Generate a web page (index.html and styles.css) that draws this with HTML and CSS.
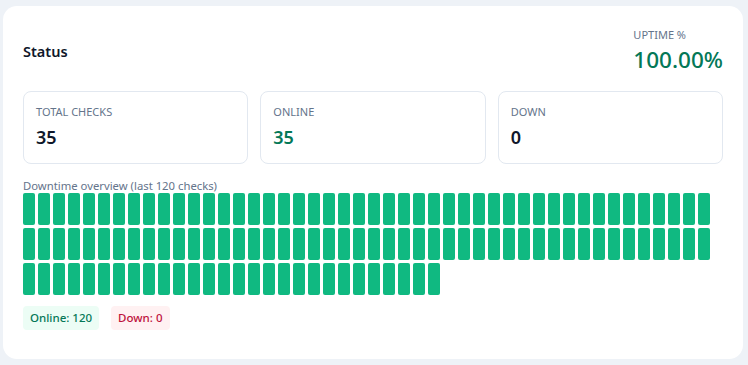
FILE: index.html
```html
<!DOCTYPE html>
<html>
<head>
    <title>Status</title>
    <link rel="stylesheet" href="styles.css">
</head>
<body>
    <div class="card">
        <div class="header">
            <h2 class="title">Status</h2>
            <div class="uptime">
                <div class="label">UPTIME %</div>
                <div class="uptime-value">100.00%</div>
            </div>
        </div>

        <div class="stats">
            <div class="stat">
                <div class="label">TOTAL CHECKS</div>
                <div class="stat-value">35</div>
            </div>
            <div class="stat">
                <div class="label">ONLINE</div>
                <div class="stat-value online">35</div>
            </div>
            <div class="stat">
                <div class="label">DOWN</div>
                <div class="stat-value">0</div>
            </div>
        </div>

        <div class="overview-title">Downtime overview (last 120 checks)</div>
        <div class="bars" id="bars"></div>

        <div class="badges">
            <span class="badge badge-online">Online: 120</span>
            <span class="badge badge-down">Down: 0</span>
        </div>
    </div>

    <script>
        var bars = document.getElementById("bars");
        for (var i = 0; i < 120; i++) {
            var b = document.createElement("span");
            b.className = "bar";
            bars.appendChild(b);
        }
    </script>
</body>
</html>
```

FILE: styles.css
```css
/* page */
body {
    margin: 0;
    padding: 6px 5px 0 3px;
    background-color: #eef2f7;
    font-family: "Noto Sans", "Open Sans", sans-serif;
    color: #0f172a;
}
.card {
    width: 700px;
    padding: 20px 20px 29px 20px;
    background-color: #fff;
    border-radius: 14px;
}

/* header */
.header {
    display: flex;
    justify-content: space-between;
    align-items: center;
}
.title {
    margin: 0;
    font-size: 14.5px;
    font-weight: 600;
}
.uptime {
    padding-top: 2px;
}
.label {
    font-size: 11px;
    color: #64748b;
    line-height: 14px;
}
.uptime-value {
    font-size: 22.5px;
    font-weight: 500;
    line-height: 30px;
    margin-top: 3px;
    color: #047857;
}

/* stat cards */
.stats {
    display: grid;
    grid-template-columns: repeat(3, 1fr);
    gap: 12px;
    margin-top: 16px;
}
.stat {
    border: solid 1px #e2e8f0;
    border-radius: 8px;
    padding: 13px 12px 12px 12px;
    height: 46px;
}
.stat-value {
    font-size: 18px;
    font-weight: 600;
    line-height: 24px;
    margin-top: 6px;
}
.stat-value.online {
    color: #047857;
}

/* downtime bars */
.overview-title {
    margin-top: 15px;
    font-size: 11.3px;
    line-height: 14px;
    color: #64748b;
}
.bars {
    display: flex;
    flex-wrap: wrap;
    gap: 3px;
}
.bar {
    width: 12px;
    height: 32px;
    border-radius: 2px;
    background-color: #10b981;
}

/* badges */
.badges {
    display: flex;
    gap: 12px;
    margin-top: 11px;
}
.badge {
    font-size: 11.5px;
    font-weight: 500;
    line-height: 24px;
    padding: 0 7px;
    border-radius: 4px;
}
.badge-online {
    background-color: #ecfdf5;
    color: #047857;
}
.badge-down {
    background-color: #fff1f2;
    color: #be123c;
}
```
